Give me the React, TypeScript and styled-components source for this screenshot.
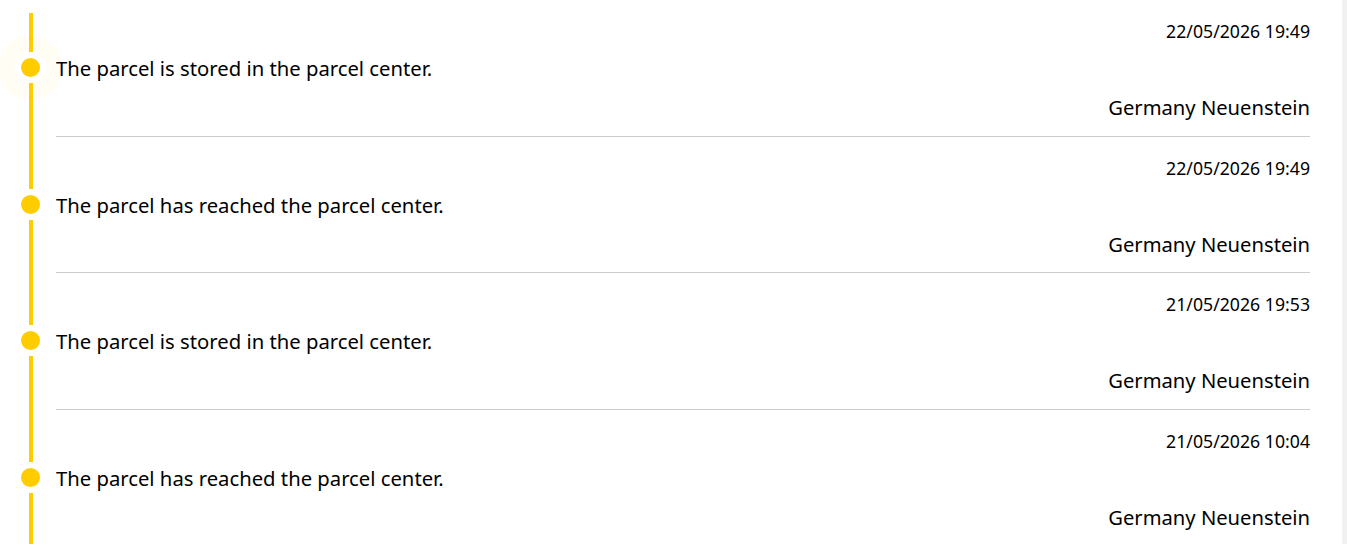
import React from "react";
import styled, { createGlobalStyle } from "styled-components";

const Global = createGlobalStyle`
  html, body { margin: 0; padding: 0; background: #fff; }
  body { font-family: "Noto Sans", "Open Sans", sans-serif; color: #000; }
`;

const Page = styled.div`
  display: flex;
  width: 1347px;
  height: 544px;
  overflow: hidden;
`;

const Main = styled.main`
  flex: 1;
  padding-right: 32px;
`;

const Strip = styled.div`
  width: 5px;
  background: #f1f1f1;
`;

const List = styled.ol`
  list-style: none;
  margin: 0;
  padding: 0;
`;

const Item = styled.li`
  display: flex;
`;

const Rail = styled.div`
  width: 56px;
  flex: none;
  display: flex;
  flex-direction: column;
  align-items: flex-start;
`;

const Line = styled.div<{ $first?: boolean; $top?: boolean }>`
  width: 4px;
  margin-left: 29px;
  background: #ffcc00;
  ${(p) =>
    p.$top
      ? `height: ${p.$first ? 39 : 52}px; margin-top: ${p.$first ? 13 : 0}px;`
      : `flex: 1;`}
`;

const Dot = styled.div<{ $active?: boolean }>`
  width: 19px;
  height: 19px;
  margin-left: 14.5px;
  border: 6.5px solid #fff;
  border-radius: 50%;
  background: #ffcc00;
  box-shadow: ${(p) => (p.$active ? "0 0 0 17px rgba(255, 204, 0, 0.045)" : "none")};
`;

const Content = styled.div`
  flex: 1;
  display: flex;
  flex-direction: column;
  padding: 19px 0 16.5px;
  border-bottom: 1px solid #cccccc;
`;

const DateText = styled.div`
  font-size: 17.7px;
  line-height: 24px;
  text-align: right;
`;

const Message = styled.div`
  font-size: 20.25px;
  line-height: 24px;
  margin-top: 13px;
`;

const Location = styled.div`
  font-size: 20.2px;
  line-height: 24px;
  text-align: right;
  margin-top: 15px;
`;

const events = [
  { date: "22/05/2026 19:49", msg: "The parcel is stored in the parcel center.", loc: "Germany Neuenstein" },
  { date: "22/05/2026 19:49", msg: "The parcel has reached the parcel center.", loc: "Germany Neuenstein" },
  { date: "21/05/2026 19:53", msg: "The parcel is stored in the parcel center.", loc: "Germany Neuenstein" },
  { date: "21/05/2026 10:04", msg: "The parcel has reached the parcel center.", loc: "Germany Neuenstein" },
];

export default function App() {
  return (
    <Page>
      <Global />
      <Main>
        <List>
          {events.map((e, i) => (
            <Item key={i}>
              <Rail>
                <Line $top $first={i === 0} />
                <Dot $active={i === 0} />
                <Line />
              </Rail>
              <Content>
                <DateText>{e.date}</DateText>
                <Message>{e.msg}</Message>
                <Location>{e.loc}</Location>
              </Content>
            </Item>
          ))}
        </List>
      </Main>
      <Strip />
    </Page>
  );
}
